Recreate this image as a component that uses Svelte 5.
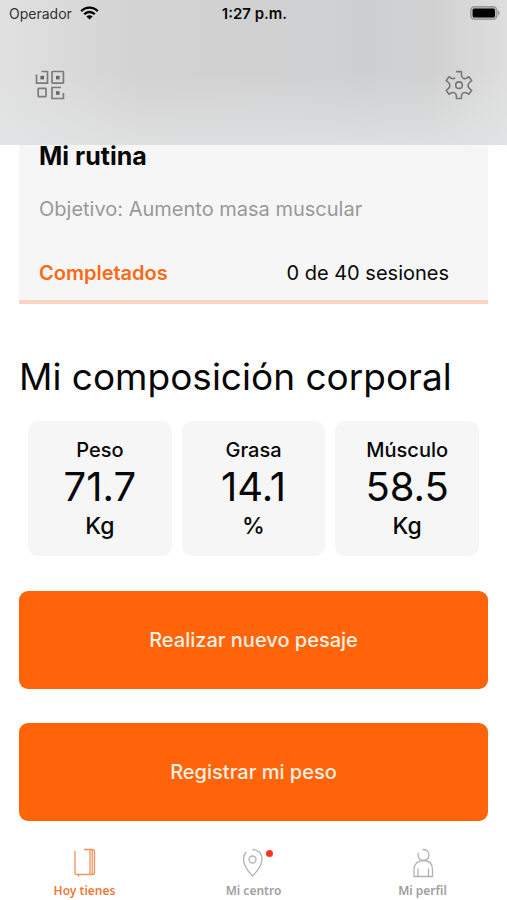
<script lang="ts">
	type Metric = { label: string; value: string; unit: string };

	let { completed = 0, total = 40 }: { completed?: number; total?: number } = $props();

	const metrics: Metric[] = [
		{ label: 'Peso', value: '71.7', unit: 'Kg' },
		{ label: 'Grasa', value: '14.1', unit: '%' },
		{ label: 'Músculo', value: '58.5', unit: 'Kg' }
	];

	const tabs = [
		{ id: 'hoy', label: 'Hoy tienes', badge: false },
		{ id: 'centro', label: 'Mi centro', badge: true },
		{ id: 'perfil', label: 'Mi perfil', badge: false }
	];

	let active = $state('hoy');
</script>

<div class="app">
	<header>
		<div class="status">
			<span class="carrier">
				Operador
				<svg width="19" height="14" viewBox="0 0 19 14" aria-hidden="true">
					<g fill="none" stroke="#000" stroke-width="2.3">
						<path d="M1.2 5.1a11.7 11.7 0 0 1 16.6 0" />
						<path d="M4.2 8.2a7.5 7.5 0 0 1 10.6 0" />
					</g>
					<path d="M9.5 13.6 6.4 10.5a4.4 4.4 0 0 1 6.2 0z" />
				</svg>
			</span>
			<time>1:27 p.m.</time>
			<svg class="battery" width="30" height="14" viewBox="0 0 30 14" aria-hidden="true">
				<rect x="0.8" y="0.8" width="26" height="12.4" rx="3.6" fill="#bbb" stroke="#9b9b9b" stroke-width="1.5" />
				<rect x="2.6" y="2.6" width="22.4" height="8.8" rx="1.6" />
				<path d="M28.2 4.6c1.8.6 1.8 4.2 0 4.8z" fill="#8d8d8d" />
			</svg>
		</div>
		<div class="toolbar">
			<button aria-label="Código QR">
				<svg width="30" height="30" viewBox="0 0 30 30" fill="none" stroke="#7c7c7c" stroke-width="1.7">
					<path d="M1.5 4.5v8.7h11V1.5h-6" />
					<rect x="17" y="1.5" width="11.4" height="11.7" rx="0.6" />
					<rect x="3.2" y="18.4" width="7.8" height="8.2" rx="0.6" />
					<path d="M26 17.5h-9v11h11.4V23" />
					<g fill="#666" stroke="none">
						<rect x="5.4" y="5.8" width="3.6" height="3.6" />
						<rect x="21" y="5.8" width="3.6" height="3.6" />
						<rect x="21" y="21.2" width="3.6" height="3.6" />
					</g>
				</svg>
			</button>
			<button aria-label="Ajustes">
				<svg width="30" height="30" viewBox="0 0 30 30" fill="none" stroke="#777" stroke-width="1.6" stroke-linejoin="round">
					<path
						d="M12 1.6h5.4v3.2c0 3.2 3 4.8 5.8 3l1.7-1 2.8 3.8-1.6 1.3c-2.7 2-2.7 5.2 0 7.2l1.6 1.2-2.8 3.9-1.7-1c-2.8-1.7-5.8-.2-5.8 3v2.3h-5v-2.3c0-3.2-3-4.7-5.8-3l-1.7 1-2.7-3.9 1.6-1.2c2.7-2 2.7-5.2 0-7.2L2.2 10.6 5 6.8l1.6 1c1.500 1 3 1 4.600.3"
					/>
					<circle cx="15" cy="15.2" r="3.3" />
				</svg>
			</button>
		</div>
	</header>

	<main>
		<section class="routine">
			<h2>Mi rutina</h2>
			<p class="goal">Objetivo: Aumento masa muscular</p>
			<div class="progress">
				<strong>Completados</strong>
				<span>{completed} de {total} sesiones</span>
			</div>
		</section>

		<h1>Mi composición corporal</h1>

		<ul class="metrics">
			{#each metrics as m}
				<li>
					<span class="label">{m.label}</span>
					<span class="value">{m.value}</span>
					<span class="unit">{m.unit}</span>
				</li>
			{/each}
		</ul>

		<div class="actions">
			<button>Realizar nuevo pesaje</button>
			<button>Registrar mi peso</button>
		</div>
	</main>

	<nav>
		{#each tabs as tab}
			<button class:active={active === tab.id} onclick={() => (active = tab.id)}>
				<span class="icon">
					<svg width="30" height="30" viewBox="0 0 30 30" fill="none" stroke="currentColor" stroke-width="1.3" aria-hidden="true">
						{#if tab.id === 'hoy'}
							<path d="M5 3v22q0 1.5 1.5 1.5H22q2.5 0 2.5-2V3.5q0-2-2-2H14M20 1.5v25M22.2 2v24M8.5 26.5v2" />
						{:else if tab.id === 'centro'}
							<path d="M13.5 1.5c6 0 9.5 4 9.5 9.5 0 6-5 12.500-9.500 17C9 23.5 4.5 17 4.5 11c0-3 .8-5.2 2.8-7" />
							<circle cx="13.5" cy="11.5" r="3.5" />
						{:else}
							<path d="M14.5 1.6a5.5 5.5 0 1 1-4 3.200" />
							<path d="M6 28.500V21.500c0-5.500 3.500-9 9.500-9s9 3.500 9 9v7zM10 28v-7.500M20.500 28v-7.500" />
						{/if}
					</svg>
					{#if tab.badge}<i class="badge"></i>{/if}
				</span>
				{tab.label}
			</button>
		{/each}
	</nav>
</div>

<style>
	:global(body) {
		margin: 0;
		background: #fff;
	}
	.app {
		display: flex;
		flex-direction: column;
		min-height: 100vh;
		font-family: Inter, 'Liberation Sans', sans-serif;
		color: #080808;
	}
	button {
		border: none;
		padding: 0;
		background: none;
		font: inherit;
		cursor: pointer;
	}
	svg { display: block; }
	header {
		box-sizing: border-box;
		height: 145px;
		background:
			linear-gradient(to bottom, rgba(228, 230, 231, 0) 50%, rgba(228, 230, 231, 0.65)),
			linear-gradient(to right, #e1e1e1, #d3d2d2 28%, #d1d1d2 55%, #cdd0d2 72%, #d1d1d1 85%, #dedede);
	}
	.status {
		display: grid;
		grid-template-columns: 1fr auto 1fr;
		align-items: center;
		height: 26px;
		padding: 0 7px 0 9px;
		font-size: 14px;
	}
	.carrier {
		display: flex;
		align-items: center;
		gap: 8px;
		color: #333;
	}
	time {
		font-size: 15px;
		font-weight: 600;
	}
	.battery { justify-self: end; }
	.toolbar {
		display: flex;
		justify-content: space-between;
		padding: 44px 33px 0 35px;
	}
	main {
		flex: 1;
		padding: 0 19px;
	}
	.routine {
		padding: 0 39px 0 20px;
		background: #f6f6f6;
		border-bottom: 4px solid #fbd5c1;
	}
	h2 {
		margin: 0;
		font-size: 25px;
		font-weight: 700;
		line-height: 22px;
	}
	.goal {
		margin: 30px 0 0;
		font-size: 20px;
		line-height: 24px;
		color: #999;
	}
	.progress {
		display: flex;
		justify-content: space-between;
		padding: 40px 0 15px;
		font-size: 20px;
		line-height: 24px;
	}
	.progress strong {
		font-weight: 600;
		color: #f96a14;
	}
	h1 {
		margin: 49px 0 20px;
		font-size: 37px;
		font-weight: 400;
		line-height: 48px;
	}
	.metrics {
		display: grid;
		grid-template-columns: repeat(3, 1fr);
		gap: 10px;
		margin: 0;
		padding: 0 9px;
		list-style: none;
	}
	.metrics li {
		display: flex;
		flex-direction: column;
		align-items: center;
		padding: 16px 0 15px;
		border-radius: 10px;
		background: #f6f6f6;
	}
	.label {
		font-size: 20px;
		font-weight: 500;
		line-height: 26px;
	}
	.value {
		font-size: 40px;
		line-height: 48px;
	}
	.unit {
		font-size: 23px;
		font-weight: 500;
		line-height: 30px;
	}
	.actions {
		display: grid;
		gap: 34px;
		margin-top: 35px;
	}
	.actions button {
		height: 98px;
		border-radius: 9px;
		background: #ff640a;
		color: #fff0e4;
		font-size: 20px;
		font-weight: 500;
	}
	nav {
		display: grid;
		grid-template-columns: repeat(3, 1fr);
		padding: 27px 0 0;
	}
	nav button {
		display: flex;
		flex-direction: column;
		align-items: center;
		gap: 5px;
		height: 52px;
		font-family: 'Noto Sans', 'Open Sans', sans-serif;
		font-size: 12px;
		font-weight: 600;
		line-height: 16px;
		color: #a0a0a0;
	}
	nav button.active { color: #f0793a; }
	.icon { position: relative; }
	.icon svg { opacity: 0.8; }
	.badge {
		position: absolute;
		top: 2px;
		right: -4px;
		width: 7px;
		height: 7px;
		border-radius: 50%;
		background: #ff3522;
	}
</style>
